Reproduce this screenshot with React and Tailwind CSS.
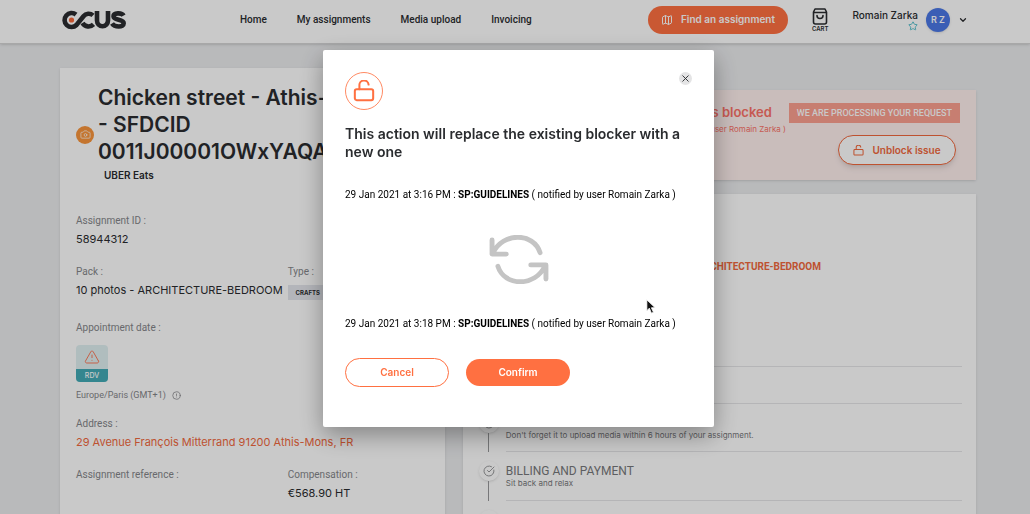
import React from 'react';
import { Map, ChevronDown, Star, Camera, TriangleAlert, CircleAlert, X, CircleCheckBig } from 'lucide-react';

const NAV_LINKS = ['Home', 'My assignments', 'Media upload', 'Invoicing'];

const STEPS = [
  { id: 'booked', height: 'h-[49px]' },
  { id: 'shooting', height: 'h-[37px]' },
  { id: 'upload', height: 'h-[48px]', text: "Don't forget it to upload media within 6 hours of your assignment." },
  { id: 'billing', height: 'h-[49px]', title: 'BILLING AND PAYMENT', text: 'Sit back and relax' },
  { id: 'done', height: 'h-[49px]' },
];

const Logo = () => (
  <svg viewBox="0 0 64 20" className="h-5 w-16" role="img" aria-label="OCUS">
    <g fill="none" stroke="#2a2c2f" strokeWidth="4.6">
      <path d="M14 4.600A7 7 0 1 0 14.500 15L21.500 6.200A6.600 6.600 0 0 1 31 5.400" />
      <path d="M20.500 13A7 7 0 0 0 31.500 14.400" />
      <path d="M35 1V10.500a5.500 5.700 0 0 0 11 0V1" />
      <path d="M61.500 5.600C60 2.600 51.500 2.400 51.500 6.300C51.500 10.800 61.700 8.600 61.700 13.200C61.700 17.800 52.500 17.400 50 13.600" />
    </g>
    <circle cx="9.5" cy="10" r="2.6" fill="#f96a3b" />
  </svg>
);

const UnlockIcon = ({ className }) => (
  <svg viewBox="0 0 24 24" className={className} fill="none" stroke="currentColor" strokeWidth="2.2" strokeLinecap="round" strokeLinejoin="round" aria-hidden="true">
    <rect x="2" y="10" width="20" height="12" rx="2" />
    <path d="M7 10V6a5 5 0 0 1 10-1" />
  </svg>
);

const Header = () => (
  <header className="flex h-11 items-center border-b border-[#d5d5d6] bg-white pr-[62px] pb-1 pl-[62px] shadow-sm">
    <a href="#home"><Logo /></a>
    <nav className="ml-[114px] flex gap-[30px] font-['Roboto',sans-serif] text-[10px] leading-4 font-medium">
      {NAV_LINKS.map((link) => (
        <a key={link} href="#nav">{link}</a>
      ))}
    </nav>
    <div className="ml-auto flex items-center">
      <button className="flex h-7 w-[140px] items-center justify-center gap-2 rounded-full bg-[#ff7041] text-[10px] font-semibold text-white">
        <Map className="size-3" />
        Find an assignment
      </button>
      <a href="#cart" className="ml-6 flex flex-col items-center text-[6px] leading-[7px] font-semibold">
        <svg viewBox="0 0 16 17" className="h-[17px] w-4" fill="none" stroke="currentColor" strokeWidth="1.6" strokeLinejoin="round" strokeLinecap="round" aria-hidden="true">
          <path d="M1.500 4L3 1h10l1.500 3V14a2 2 0 0 1-2 2h-9a2 2 0 0 1-2-2zM1.500 4.500h13M5 7.500a3 3 0 0 0 6 0" />
        </svg>
        CART
      </a>
      <div className="ml-6 flex flex-col items-end text-[10px] leading-[12px] font-medium">
        Romain Zarka
        <Star className="size-[10px] text-[#3cb6c4]" />
      </div>
      <span className="ml-2 flex size-6 items-center justify-center rounded-full bg-[#4b78e6] text-[9px] font-semibold text-white shadow">R Z</span>
      <button aria-label="Open menu" className="ml-2"><ChevronDown className="size-[10px]" strokeWidth={3} /></button>
    </div>
  </header>
);

const Field = ({ label, children }) => (
  <div className="text-[11px] leading-[18px]">
    <dt className="font-['Roboto',sans-serif] text-[10px] text-[#85868a]">{label}</dt>
    <dd>{children}</dd>
  </div>
);

const AssignmentCard = () => (
  <section className="bg-white px-4 pt-4 pb-10 shadow">
    <div className="flex items-center gap-1">
      <span className="flex size-[18px] shrink-0 items-center justify-center rounded-full bg-[#f9953c] text-white">
        <Camera className="size-[11px]" strokeWidth={1.5} />
      </span>
      <div>
        <h1 className="text-[21px] leading-[27px] font-semibold">
          Chicken street - Athis-Mons <span className="whitespace-nowrap">- SFDCID</span>
          <br />
          0011J00001OWxYAQA1
        </h1>
        <p className="ml-1.5 text-[10px] leading-[20px] font-semibold">UBER Eats</p>
      </div>
    </div>

    <dl className="mt-[27px] flex flex-col gap-[15px]">
      <Field label="Assignment ID :">58944312</Field>
      <div className="grid grid-cols-[3fr_2fr]">
        <Field label="Pack :">10 photos - ARCHITECTURE-BEDROOM</Field>
        <Field label="Type :">
          <span className="mt-1 flex h-[15px] w-10 items-center justify-center bg-[#e4e6ec] text-[6px] font-bold">CRAFTS</span>
        </Field>
      </div>
      <div className="mt-1">
        <Field label="Appointment date :">
          <div className="mt-2 flex w-8 flex-col overflow-hidden rounded-sm bg-[#e0f0f2]">
            <TriangleAlert className="mx-auto my-1 size-4 text-[#fa7a5a]" strokeWidth={1.5} />
            <span className="bg-[#42aab6] text-center text-[7px] leading-[13px] font-medium text-white">RDV</span>
          </div>
          <span className="mt-1 flex items-center gap-1.5 font-['Roboto',sans-serif] text-[9px] text-[#85868a]">
            Europe/Paris (GMT+1) <CircleAlert className="size-[9px]" />
          </span>
        </Field>
      </div>
      <div className="-mt-1">
        <Field label="Address :">
          <a href="#map" className="text-[#f1683d]">29 Avenue François Mitterrand 91200 Athis-Mons, FR</a>
        </Field>
      </div>
      <div className="grid grid-cols-[3fr_2fr]">
        <Field label="Assignment reference :" />
        <Field label="Compensation :">€568.90 HT</Field>
      </div>
    </dl>
  </section>
);

const BlockedAlert = () => (
  <section className="flex h-[90px] flex-col items-end bg-[#fff0ee] px-4 pt-[13px] shadow-sm">
    <div className="flex items-start gap-[17px]">
      <h2 className="text-[13px] leading-[18px] font-semibold text-[#fb7268]">Issue is blocked</h2>
      <span className="bg-[#fda090] px-2 font-['Roboto',sans-serif] text-[9px] leading-5 font-medium text-white">WE ARE PROCESSING YOUR REQUEST</span>
    </div>
    <p className="mr-[174px] -mt-0.5 text-[8px] leading-4 text-[#fb7268]">( notified by user Romain Zarka )</p>
    <button className="mr-1 -mt-0.5 flex h-[30px] w-[118px] shrink-0 items-center justify-center gap-2 rounded-full border border-[#f1683d] bg-white text-[10px] font-semibold text-[#f1683d] shadow-md">
      <UnlockIcon className="size-[11px]" />
      Unblock issue
    </button>
  </section>
);

const Timeline = () => (
  <section className="mt-3.5 bg-white pt-16 pr-3.5 pb-10 pl-4 shadow">
    <p className="mr-[141px] text-right font-['Roboto',sans-serif] text-[10px] leading-[18px] font-bold text-[#f1683d]">10 photos - ARCHITECTURE-BEDROOM</p>
    <ol className="mt-[42px]">
      {STEPS.map((step) => (
        <li key={step.id} className={`flex gap-[7px] ${step.height}`}>
          <div className="flex w-5 flex-col items-center">
            <span className="mt-[9px] flex size-5 shrink-0 items-center justify-center rounded-full text-[#97989a] shadow">
              <CircleCheckBig className="size-3" />
            </span>
            <span className="w-px flex-1 bg-[#97989a]" />
          </div>
          <div className="flex-1 border-b border-[#e6e6e8] pt-3 text-[#77787b]">
            <h3 className="h-[14px] font-['Roboto',sans-serif] text-[12px] leading-[14px]">{step.title}</h3>
            <p className="text-[8px] leading-[11px]">{step.text}</p>
          </div>
        </li>
      ))}
    </ol>
  </section>
);

const BlockerEntry = ({ time }) => (
  <p className="font-['Roboto',sans-serif] text-[10px] leading-4 text-black">
    29 Jan 2021 at {time} : <strong className="font-bold">SP:GUIDELINES</strong> ( notified by user Romain Zarka )
  </p>
);

const ReplaceBlockerModal = () => (
  <div className="fixed inset-0 flex items-start justify-center bg-black/21 pt-[50px] pl-[7px]">
    <div role="dialog" aria-labelledby="modal-title" className="w-[391px] rounded-xs bg-white px-[22px] pt-[22px] pb-10 shadow-[0_8px_24px_rgba(0,0,0,0.35)]">
      <div className="flex items-start justify-between">
        <span className="flex size-[38px] items-center justify-center rounded-full border border-[#ff8a63] text-[#ff7041]">
          <UnlockIcon className="size-[22px]" />
        </span>
        <button aria-label="Close" className="flex size-[13px] items-center justify-center rounded-full bg-[#e4e4e5]">
          <X className="size-[11px] shrink-0" />
        </button>
      </div>
      <h2 id="modal-title" className="mt-[15px] text-[14px] leading-[18px] font-semibold">
        This action will replace the existing blocker with a new one
      </h2>
      <div className="mt-[26px]">
        <BlockerEntry time="3:16 PM" />
      </div>
      <svg viewBox="0 0 60 50" className="mx-auto my-8 h-[49px] w-[60px]" fill="none" stroke="#c4c4c4" strokeWidth="5" strokeLinecap="round" strokeLinejoin="round" aria-hidden="true">
        <path d="M2.500 5V19.500H17M3.500 18.500C13-3 45-3 51.500 18" />
        <path d="M57.500 45V30.500H42M56.500 31.500C47 53 15 53 8.500 32" />
      </svg>
      <BlockerEntry time="3:18 PM" />
      <div className="mt-[26px] flex items-center gap-[17px] text-[10px] font-semibold">
        <button className="h-[29px] w-[104px] rounded-full border border-[#ff7041] text-[#ff7041]">Cancel</button>
        <button className="h-[27px] w-[104px] rounded-full bg-[#ff7041] text-white">Confirm</button>
      </div>
    </div>
  </div>
);

const App = () => (
  <div className="h-screen overflow-hidden bg-[#ebecee] font-['Inter','Liberation_Sans',sans-serif] text-[#2a2c2f]">
    <Header />
    <main className="grid grid-cols-[3fr_4fr] gap-[18px] pt-6 pr-[54px] pl-[60px]">
      <AssignmentCard />
      <div className="pt-[22px]">
        <BlockedAlert />
        <Timeline />
      </div>
    </main>
    <ReplaceBlockerModal />
    <svg viewBox="0 0 12 18" className="pointer-events-none fixed top-[299px] left-[646px] h-[15px] w-[10px]" aria-hidden="true">
      <path d="M1 1v13l3-3 2.500 6 2.500-1-2.500-5.500H11z" fill="#111" stroke="#fff" strokeWidth="1" />
    </svg>
  </div>
);

export default App;
